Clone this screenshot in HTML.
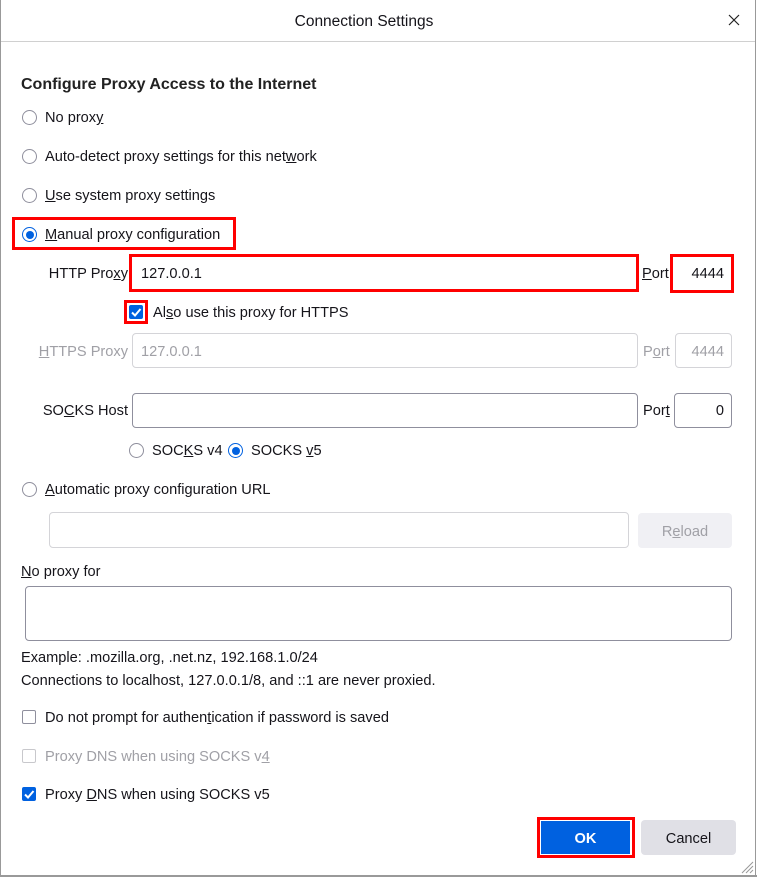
<!DOCTYPE html>
<html><head><style>
body{margin:0;width:757px;height:877px;background:#fff;font-family:"Liberation Sans",sans-serif;font-size:14.6px;color:#15141a;position:relative;overflow:hidden}
.a{position:absolute;white-space:nowrap;line-height:18px;margin-top:1px}
.r{position:absolute;width:13px;height:13px;border:1px solid #8f8f9d;border-radius:50%;background:#fff}
.r.on{border:1px solid #0061e0}
.r.on::after{content:"";position:absolute;left:2.5px;top:2.5px;width:8px;height:8px;border-radius:50%;background:#0061e0}
.in{position:absolute;border:1px solid #8f8f9d;border-radius:4px;background:#fff;box-sizing:border-box}
.dis{border-color:#d4d4d8;color:#a0a0a6}
.cb{position:absolute;width:14px;height:14px;border:1px solid #8f8f9d;border-radius:2px;box-sizing:border-box;background:#fff}
.cb.on{background:#0061e0;border-color:#0061e0}
.red{position:absolute;border:3px solid #f00;box-sizing:border-box}
u{text-decoration:underline}
</style></head><body>
<div style="position:absolute;left:0;top:0;width:1px;height:877px;background:#999"></div>
<div style="position:absolute;right:1px;top:0;width:1px;height:877px;background:#999"></div>
<div style="position:absolute;left:0;top:875px;width:757px;height:2px;background:#999"></div>
<div style="position:absolute;left:1px;top:41px;width:754px;height:1px;background:#d0d0d0"></div>
<div class="a" style="left:0;width:728px;text-align:center;top:12px;font-size:15.5px">Connection Settings</div>
<svg style="position:absolute;left:728px;top:14px" width="12" height="12"><path d="M1 1L11 11M11 1L1 11" stroke="#222" stroke-width="1.2"/></svg>

<div class="a" style="left:21px;top:75px;font-size:16px;font-weight:bold;color:#222">Configure Proxy Access to the Internet</div>

<div class="r" style="left:22px;top:110px"></div><div class="a" style="left:45px;top:108px">No prox<u>y</u></div>
<div class="r" style="left:22px;top:149px"></div><div class="a" style="left:45px;top:147px">Auto-detect proxy settings for this net<u>w</u>ork</div>
<div class="r" style="left:22px;top:188px"></div><div class="a" style="left:45px;top:186px"><u>U</u>se system proxy settings</div>
<div class="red" style="left:12px;top:217px;width:224px;height:33px"></div>
<div class="r on" style="left:22px;top:227px"></div><div class="a" style="left:45px;top:225px"><u>M</u>anual proxy configuration</div>

<div class="a" style="left:0;width:128px;text-align:right;top:264px">HTTP Pro<u>x</u>y</div>
<div class="red" style="left:129px;top:254px;width:510px;height:38px"></div>
<div class="a" style="left:141px;top:264px">127.0.0.1</div>
<div class="a" style="left:642px;top:264px"><u>P</u>ort</div>
<div class="red" style="left:670px;top:254px;width:64px;height:39px"></div>
<div class="a" style="left:672px;width:52px;text-align:right;top:264px">4444</div>

<div class="red" style="left:124px;top:300px;width:24px;height:24px"></div>
<div class="cb on" style="left:129px;top:305px"></div>
<svg style="position:absolute;left:129px;top:305px" width="14" height="14"><path d="M3 7.5L6 10.5L11.5 4" stroke="#fff" stroke-width="2" fill="none"/></svg>
<div class="a" style="left:153px;top:303px">Al<u>s</u>o use this proxy for HTTPS</div>

<div class="a" style="left:0;width:128px;text-align:right;top:342px;color:#a0a0a6"><u>H</u>TTPS Proxy</div>
<div class="in dis" style="left:132px;top:333px;width:506px;height:35px"></div>
<div class="a" style="left:141px;top:342px;color:#a0a0a6">127.0.0.1</div>
<div class="a" style="left:643px;top:342px;color:#a0a0a6">P<u>o</u>rt</div>
<div class="in dis" style="left:675px;top:333px;width:57px;height:35px"></div>
<div class="a" style="left:675px;width:49px;text-align:right;top:342px;color:#a0a0a6">4444</div>

<div class="a" style="left:0;width:128px;text-align:right;top:401px">SO<u>C</u>KS Host</div>
<div class="in" style="left:132px;top:393px;width:506px;height:35px"></div>
<div class="a" style="left:643px;top:401px">Por<u>t</u></div>
<div class="in" style="left:674px;top:393px;width:58px;height:35px"></div>
<div class="a" style="left:674px;width:50px;text-align:right;top:401px">0</div>

<div class="r" style="left:129px;top:443px"></div><div class="a" style="left:152px;top:441px">SOC<u>K</u>S v4</div>
<div class="r on" style="left:228px;top:443px"></div><div class="a" style="left:251px;top:441px">SOCKS <u>v</u>5</div>

<div class="r" style="left:22px;top:482px"></div><div class="a" style="left:45px;top:480px"><u>A</u>utomatic proxy configuration URL</div>
<div class="in dis" style="left:49px;top:512px;width:580px;height:36px"></div>
<div style="position:absolute;left:638px;top:513px;width:94px;height:35px;background:#f0f0f4;border-radius:4px"></div>
<div class="a" style="left:638px;width:94px;text-align:center;top:522px;color:#a0a0a6">R<u>e</u>load</div>

<div class="a" style="left:21px;top:562px"><u>N</u>o proxy for</div>
<div class="in" style="left:25px;top:586px;width:707px;height:55px"></div>
<div class="a" style="left:21px;top:648px">Example: .mozilla.org, .net.nz, 192.168.1.0/24</div>
<div class="a" style="left:21px;top:671px">Connections to localhost, 127.0.0.1/8, and ::1 are never proxied.</div>

<div class="cb" style="left:22px;top:710px"></div><div class="a" style="left:45px;top:708px">Do not prompt for authen<u>t</u>ication if password is saved</div>
<div class="cb" style="left:22px;top:749px;border-color:#c8c8cc"></div><div class="a" style="left:45px;top:747px;color:#a0a0a6">Proxy DNS when using SOCKS v<u>4</u></div>
<div class="cb on" style="left:22px;top:787px"></div>
<svg style="position:absolute;left:22px;top:787px" width="14" height="14"><path d="M3 7.5L6 10.5L11.5 4" stroke="#fff" stroke-width="2" fill="none"/></svg>
<div class="a" style="left:45px;top:785px">Proxy <u>D</u>NS when using SOCKS v5</div>

<div class="red" style="left:537px;top:817px;width:98px;height:41px"></div>
<div style="position:absolute;left:541px;top:821px;width:89px;height:33px;background:#0061e0"></div>
<div class="a" style="left:541px;width:89px;text-align:center;top:829px;color:#fff;font-weight:bold">OK</div>
<div style="position:absolute;left:641px;top:820px;width:95px;height:35px;background:#e0e0e6;border-radius:4px"></div>
<div class="a" style="left:641px;width:95px;text-align:center;top:829px">Cancel</div>
<svg style="position:absolute;left:740px;top:860px" width="14" height="14"><path d="M2 13L13 2M6 13L13 6M10 13L13 10" stroke="#999" stroke-width="1"/></svg>
</body></html>
